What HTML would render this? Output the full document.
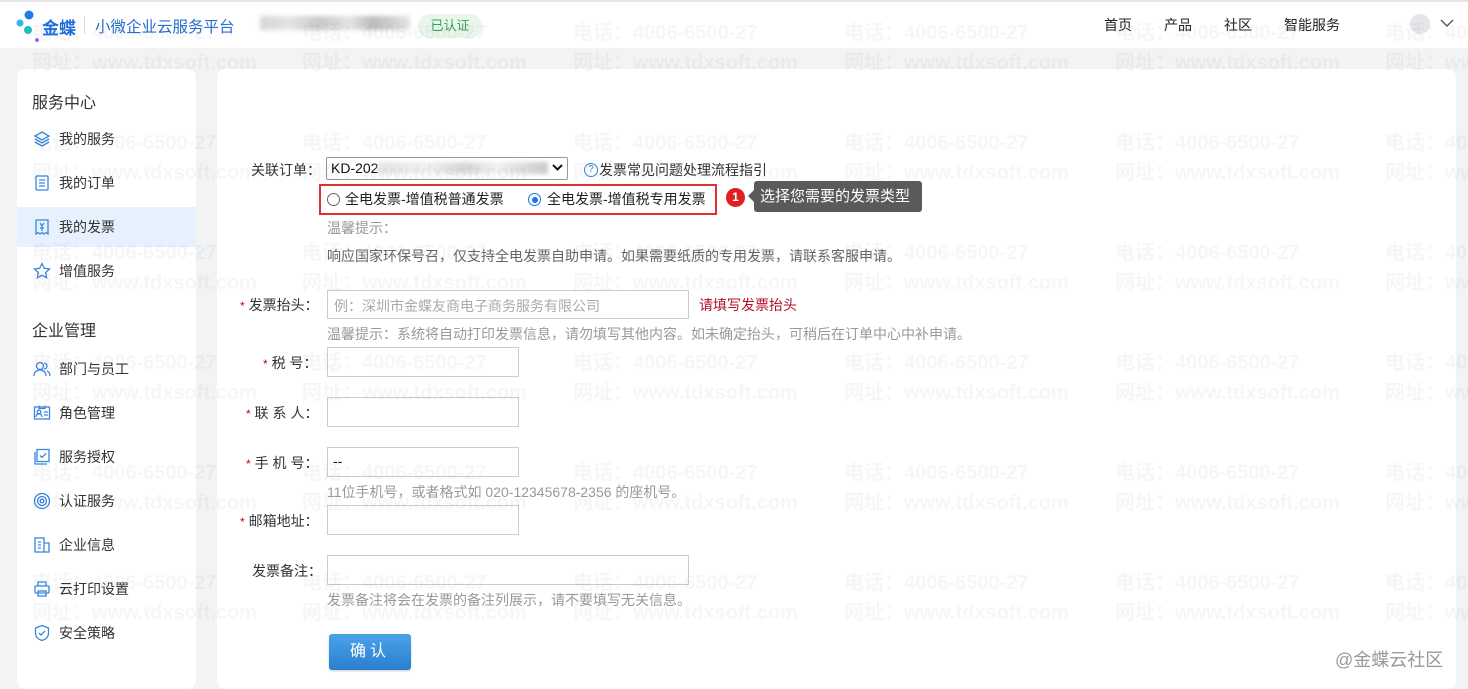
<!DOCTYPE html>
<html><head><meta charset="utf-8"><style>
*{margin:0;padding:0;box-sizing:border-box}
body{width:1468px;height:679px;overflow:hidden;background:#f2f3f5;font-family:"Liberation Sans","Noto Sans CJK SC",sans-serif;font-size:14px;color:#333;position:relative}
.top{position:absolute;left:0;top:0;width:1468px;height:48px;background:#fff;border-top:2px solid #e6e6e6}
.side{position:absolute;left:17px;top:69px;width:179px;height:620px;background:#fff;border-radius:8px}
.main{position:absolute;left:217px;top:69px;width:1239px;height:620px;background:#fff;border-radius:8px}
.abs{position:absolute;white-space:nowrap}
.wm{position:absolute;white-space:nowrap;font-weight:bold;font-size:20px;color:rgba(0,0,0,0.035);z-index:50;pointer-events:none}
.sh{font-size:16px;color:#333}
.mi{position:absolute;left:0;width:179px;height:40px;display:flex;align-items:center;padding-left:16px;font-size:14px;color:#333}
.mi svg{width:18px;height:18px;margin-right:8px}
.lbl{position:absolute;font-size:14px;color:#333;text-align:right;white-space:nowrap}
.req{color:#c00;font-size:12px;margin-right:4px}
.inp{position:absolute;border:1px solid #ccc;background:#fff}
.hint{position:absolute;font-size:14px;color:#999;white-space:nowrap}
</style></head><body>
<div class="top">
  <svg class="abs" style="left:15px;top:8px" width="26" height="34" viewBox="0 0 26 34"><circle cx="14" cy="5" r="4.5" fill="#1e7de8"/><circle cx="5" cy="13" r="3.5" fill="#2fb8e8"/><circle cx="13" cy="20" r="4" fill="#1fbcc0"/><circle cx="22" cy="30" r="2" fill="#9b6be0"/></svg>
  <div class="abs" style="left:42px;top:12px;font-size:17px;font-weight:bold;color:#1e6ee0">金蝶</div>
  <div class="abs" style="left:84px;top:14px;width:1px;height:18px;background:#c8d8ee"></div>
  <div class="abs" style="left:95px;top:13px;font-size:15.5px;color:#2a6fd0">小微企业云服务平台</div>
  <div class="abs" style="left:260px;top:14px;width:150px;height:14px;background:linear-gradient(90deg,#ccc,#ddd 20%,#bbb 40%,#ddd 60%,#aaa 75%,#ddd);filter:blur(2px);opacity:.8"></div>
  <div class="abs" style="left:418px;top:12px;width:64px;height:24px;border-radius:12px;background:#e8f6ec;color:#3aa05a;font-size:13px;text-align:center;line-height:24px">已认证</div>
  <div class="abs" style="left:1104px;top:13px;font-size:14px;color:#222">首页</div>
  <div class="abs" style="left:1164px;top:13px;font-size:14px;color:#222">产品</div>
  <div class="abs" style="left:1224px;top:13px;font-size:14px;color:#222">社区</div>
  <div class="abs" style="left:1284px;top:13px;font-size:14px;color:#222">智能服务</div>
  <div class="abs" style="left:1410px;top:12px;width:20px;height:20px;border-radius:50%;background:#e4e6ea"></div>
  <svg class="abs" style="left:1440px;top:16px" width="14" height="10" viewBox="0 0 14 10"><path d="M1 2 L7 8 L13 2" fill="none" stroke="#555" stroke-width="1.4"/></svg>
</div>
<div class="side">
  <div class="abs sh" style="left:15px;top:20px">服务中心</div>
  <div class="mi" style="top:50px"><svg viewBox="0 0 18 18" fill="none" stroke="#3a86e0" stroke-width="1.3"><path d="M9 2 L16 6 L9 10 L2 6Z"/><path d="M2 9 L9 13 L16 9"/><path d="M2 12 L9 16 L16 12"/></svg>我的服务</div>
  <div class="mi" style="top:94px"><svg viewBox="0 0 18 18" fill="none" stroke="#3a86e0" stroke-width="1.3"><rect x="3" y="2" width="12" height="14" rx="1"/><path d="M6 6h6M6 9h6M6 12h6"/></svg>我的订单</div>
  <div class="mi" style="top:138px;background:#e6f1fd"><svg viewBox="0 0 18 18" fill="none" stroke="#3a86e0" stroke-width="1.3"><path d="M3 2h12v14l-2-1.5-2 1.5-2-1.5-2 1.5-2-1.5-2 1.5z"/><path d="M7 5l2 3 2-3M9 8v5M7 10h4"/></svg>我的发票</div>
  <div class="mi" style="top:182px"><svg viewBox="0 0 18 18" fill="none" stroke="#3a86e0" stroke-width="1.3"><path d="M9 1.5l2.3 4.8 5.2.7-3.8 3.6.9 5.2L9 13.3l-4.6 2.5.9-5.2L1.5 7l5.2-.7z"/></svg>增值服务</div>
  <div class="abs sh" style="left:15px;top:248px">企业管理</div>
  <div class="mi" style="top:280px"><svg viewBox="0 0 18 18" fill="none" stroke="#3a86e0" stroke-width="1.3"><circle cx="7" cy="6" r="3.5"/><path d="M1 16c0-4 3-6 6-6s6 2 6 6"/><path d="M11 3a3 3 0 010 6M14 11c2 1 3 3 3 5"/></svg>部门与员工</div>
  <div class="mi" style="top:324px"><svg viewBox="0 0 18 18" fill="none" stroke="#3a86e0" stroke-width="1.3"><rect x="1.5" y="3" width="15" height="12"/><path d="M6 1.5v3h6v-3"/><circle cx="6" cy="8" r="1.8"/><path d="M3 13c0-2 1.5-3 3-3s3 1 3 3M11 8h4M11 11h4"/></svg>角色管理</div>
  <div class="mi" style="top:368px"><svg viewBox="0 0 18 18" fill="none" stroke="#3a86e0" stroke-width="1.3"><rect x="4" y="1.5" width="12" height="12"/><path d="M2 4v12h12"/><path d="M7 7.5l2 2 4-4"/></svg>服务授权</div>
  <div class="mi" style="top:412px"><svg viewBox="0 0 18 18" fill="none" stroke="#3a86e0" stroke-width="1.3"><circle cx="9" cy="9" r="7.5"/><circle cx="9" cy="9" r="4.5"/><circle cx="9" cy="9" r="1.8"/></svg>认证服务</div>
  <div class="mi" style="top:456px"><svg viewBox="0 0 18 18" fill="none" stroke="#3a86e0" stroke-width="1.3"><rect x="2" y="2" width="9" height="14"/><path d="M11 7h5v9h-5M5 6h3M5 9h3M5 12h3"/></svg>企业信息</div>
  <div class="mi" style="top:500px"><svg viewBox="0 0 18 18" fill="none" stroke="#3a86e0" stroke-width="1.3"><path d="M5 6V2h8v4"/><rect x="2" y="6" width="14" height="7" rx="1"/><rect x="5" y="11" width="8" height="5"/></svg>云打印设置</div>
  <div class="mi" style="top:544px"><svg viewBox="0 0 18 18" fill="none" stroke="#3a86e0" stroke-width="1.3"><path d="M9 1.5l6.5 2.5v5c0 4-3 6.5-6.5 7.5C5.5 15.5 2.5 13 2.5 9V4z"/><path d="M6 9l2 2 4-4"/></svg>安全策略</div>
</div>
<div class="main"></div>

<div class="lbl" style="left:251px;top:160px">关联订单：</div>
<div class="inp" style="left:326px;top:157px;width:242px;height:23px;border-color:#999;border-radius:2px"></div>
<div class="abs" style="left:331px;top:160px;font-size:14px;color:#111">KD-202</div>
<div class="abs" style="left:378px;top:162px;width:170px;height:12px;background:linear-gradient(90deg,#ddd,#eee 30%,#ccc 50%,#eee 70%,#bbb);filter:blur(2px);opacity:.8"></div>
<svg class="abs" style="left:552px;top:164px" width="11" height="8" viewBox="0 0 11 8"><path d="M1 1l4.5 4.5L10 1" fill="none" stroke="#111" stroke-width="2"/></svg>
<div class="abs" style="left:584px;top:163px;width:14px;height:14px;border:1px solid #3a86e0;border-radius:50%;color:#3a86e0;font-size:10px;text-align:center;line-height:12px">?</div>
<div class="abs" style="left:599px;top:160px;font-size:14px;color:#333">发票常见问题处理流程指引</div>

<div class="abs" style="left:319px;top:184px;width:398px;height:31px;border:2px solid #e03030"></div>
<div class="abs" style="left:327px;top:193px;width:13px;height:13px;border:1px solid #666;border-radius:50%"></div>
<div class="abs" style="left:345px;top:189px;font-size:14px;color:#222">全电发票-增值税普通发票</div>
<div class="abs" style="left:528px;top:193px;width:13px;height:13px;border:1px solid #1a73e8;border-radius:50%;background:#fff"><div style="margin:2.5px;width:6px;height:6px;border-radius:50%;background:#1a73e8"></div></div>
<div class="abs" style="left:547px;top:189px;font-size:14px;color:#222">全电发票-增值税专用发票</div>
<div class="abs" style="left:726px;top:188px;width:19px;height:19px;border-radius:50%;background:#e02020;color:#fff;font-size:12px;text-align:center;line-height:19px;font-weight:bold">1</div>
<div class="abs" style="left:754px;top:181px;width:168px;height:31px;background:#5a5a5a;border-radius:3px;color:#fff;font-size:15px;line-height:31px;padding-left:6px">选择您需要的发票类型</div>
<div class="abs" style="left:748px;top:190px;width:0;height:0;border-top:6px solid transparent;border-bottom:6px solid transparent;border-right:6px solid #5a5a5a"></div>

<div class="hint" style="left:327px;top:218px">温馨提示：</div>
<div class="hint" style="left:327px;top:246px;color:#666">响应国家环保号召，仅支持全电发票自助申请。如果需要纸质的专用发票，请联系客服申请。</div>

<div class="lbl" style="left:240px;top:295px"><span class="req">*</span>发票抬头：</div>
<div class="inp" style="left:327px;top:290px;width:362px;height:29px"></div>
<div class="hint" style="left:334px;top:296px;color:#aaa">例：深圳市金蝶友商电子商务服务有限公司</div>
<div class="abs" style="left:699px;top:295px;font-size:14px;color:#b0102a">请填写发票抬头</div>
<div class="hint" style="left:327px;top:324px">温馨提示：系统将自动打印发票信息，请勿填写其他内容。如未确定抬头，可稍后在订单中心中补申请。</div>

<div class="lbl" style="left:263px;top:353px"><span class="req">*</span>税 号：</div>
<div class="inp" style="left:327px;top:347px;width:192px;height:30px"></div>
<div class="lbl" style="left:246px;top:403px"><span class="req">*</span>联 系 人：</div>
<div class="inp" style="left:327px;top:397px;width:192px;height:30px"></div>
<div class="lbl" style="left:246px;top:453px"><span class="req">*</span>手 机 号：</div>
<div class="inp" style="left:327px;top:447px;width:192px;height:30px"></div>
<div class="abs" style="left:333px;top:453px;font-size:14px;color:#111">--</div>
<div class="hint" style="left:327px;top:482px">11位手机号，或者格式如 020-12345678-2356 的座机号。</div>
<div class="lbl" style="left:240px;top:511px"><span class="req">*</span>邮箱地址：</div>
<div class="inp" style="left:327px;top:505px;width:192px;height:30px"></div>
<div class="lbl" style="left:252px;top:561px">发票备注：</div>
<div class="inp" style="left:327px;top:555px;width:362px;height:30px"></div>
<div class="hint" style="left:327px;top:590px">发票备注将会在发票的备注列展示，请不要填写无关信息。</div>
<div class="abs" style="left:329px;top:634px;width:82px;height:36px;border-radius:3px;background:linear-gradient(#4aa3e6,#2b7fd0);color:#fff;font-size:16px;text-align:center;line-height:36px;letter-spacing:4px;box-shadow:0 1px 2px rgba(0,0,0,.2)">确认</div>
<div class="abs" style="left:1335px;top:646px;font-size:18px;color:#999">@金蝶云社区</div>

<div class="wm" style="left:32px;top:16px">电话：4006-6500-27</div><div class="wm" style="left:32px;top:46px">网址：www.tdxsoft.com</div>
<div class="wm" style="left:302px;top:16px">电话：4006-6500-27</div><div class="wm" style="left:302px;top:46px">网址：www.tdxsoft.com</div>
<div class="wm" style="left:573px;top:16px">电话：4006-6500-27</div><div class="wm" style="left:573px;top:46px">网址：www.tdxsoft.com</div>
<div class="wm" style="left:844px;top:16px">电话：4006-6500-27</div><div class="wm" style="left:844px;top:46px">网址：www.tdxsoft.com</div>
<div class="wm" style="left:1115px;top:16px">电话：4006-6500-27</div><div class="wm" style="left:1115px;top:46px">网址：www.tdxsoft.com</div>
<div class="wm" style="left:1385px;top:16px">电话：4006-6500-27</div><div class="wm" style="left:1385px;top:46px">网址：www.tdxsoft.com</div>
<div class="wm" style="left:32px;top:126px">电话：4006-6500-27</div><div class="wm" style="left:32px;top:156px">网址：www.tdxsoft.com</div>
<div class="wm" style="left:302px;top:126px">电话：4006-6500-27</div><div class="wm" style="left:302px;top:156px">网址：www.tdxsoft.com</div>
<div class="wm" style="left:573px;top:126px">电话：4006-6500-27</div><div class="wm" style="left:573px;top:156px">网址：www.tdxsoft.com</div>
<div class="wm" style="left:844px;top:126px">电话：4006-6500-27</div><div class="wm" style="left:844px;top:156px">网址：www.tdxsoft.com</div>
<div class="wm" style="left:1115px;top:126px">电话：4006-6500-27</div><div class="wm" style="left:1115px;top:156px">网址：www.tdxsoft.com</div>
<div class="wm" style="left:1385px;top:126px">电话：4006-6500-27</div><div class="wm" style="left:1385px;top:156px">网址：www.tdxsoft.com</div>
<div class="wm" style="left:32px;top:236px">电话：4006-6500-27</div><div class="wm" style="left:32px;top:266px">网址：www.tdxsoft.com</div>
<div class="wm" style="left:302px;top:236px">电话：4006-6500-27</div><div class="wm" style="left:302px;top:266px">网址：www.tdxsoft.com</div>
<div class="wm" style="left:573px;top:236px">电话：4006-6500-27</div><div class="wm" style="left:573px;top:266px">网址：www.tdxsoft.com</div>
<div class="wm" style="left:844px;top:236px">电话：4006-6500-27</div><div class="wm" style="left:844px;top:266px">网址：www.tdxsoft.com</div>
<div class="wm" style="left:1115px;top:236px">电话：4006-6500-27</div><div class="wm" style="left:1115px;top:266px">网址：www.tdxsoft.com</div>
<div class="wm" style="left:1385px;top:236px">电话：4006-6500-27</div><div class="wm" style="left:1385px;top:266px">网址：www.tdxsoft.com</div>
<div class="wm" style="left:32px;top:346px">电话：4006-6500-27</div><div class="wm" style="left:32px;top:376px">网址：www.tdxsoft.com</div>
<div class="wm" style="left:302px;top:346px">电话：4006-6500-27</div><div class="wm" style="left:302px;top:376px">网址：www.tdxsoft.com</div>
<div class="wm" style="left:573px;top:346px">电话：4006-6500-27</div><div class="wm" style="left:573px;top:376px">网址：www.tdxsoft.com</div>
<div class="wm" style="left:844px;top:346px">电话：4006-6500-27</div><div class="wm" style="left:844px;top:376px">网址：www.tdxsoft.com</div>
<div class="wm" style="left:1115px;top:346px">电话：4006-6500-27</div><div class="wm" style="left:1115px;top:376px">网址：www.tdxsoft.com</div>
<div class="wm" style="left:1385px;top:346px">电话：4006-6500-27</div><div class="wm" style="left:1385px;top:376px">网址：www.tdxsoft.com</div>
<div class="wm" style="left:32px;top:456px">电话：4006-6500-27</div><div class="wm" style="left:32px;top:486px">网址：www.tdxsoft.com</div>
<div class="wm" style="left:302px;top:456px">电话：4006-6500-27</div><div class="wm" style="left:302px;top:486px">网址：www.tdxsoft.com</div>
<div class="wm" style="left:573px;top:456px">电话：4006-6500-27</div><div class="wm" style="left:573px;top:486px">网址：www.tdxsoft.com</div>
<div class="wm" style="left:844px;top:456px">电话：4006-6500-27</div><div class="wm" style="left:844px;top:486px">网址：www.tdxsoft.com</div>
<div class="wm" style="left:1115px;top:456px">电话：4006-6500-27</div><div class="wm" style="left:1115px;top:486px">网址：www.tdxsoft.com</div>
<div class="wm" style="left:1385px;top:456px">电话：4006-6500-27</div><div class="wm" style="left:1385px;top:486px">网址：www.tdxsoft.com</div>
<div class="wm" style="left:32px;top:566px">电话：4006-6500-27</div><div class="wm" style="left:32px;top:596px">网址：www.tdxsoft.com</div>
<div class="wm" style="left:302px;top:566px">电话：4006-6500-27</div><div class="wm" style="left:302px;top:596px">网址：www.tdxsoft.com</div>
<div class="wm" style="left:573px;top:566px">电话：4006-6500-27</div><div class="wm" style="left:573px;top:596px">网址：www.tdxsoft.com</div>
<div class="wm" style="left:844px;top:566px">电话：4006-6500-27</div><div class="wm" style="left:844px;top:596px">网址：www.tdxsoft.com</div>
<div class="wm" style="left:1115px;top:566px">电话：4006-6500-27</div><div class="wm" style="left:1115px;top:596px">网址：www.tdxsoft.com</div>
<div class="wm" style="left:1385px;top:566px">电话：4006-6500-27</div><div class="wm" style="left:1385px;top:596px">网址：www.tdxsoft.com</div>
</body></html>
